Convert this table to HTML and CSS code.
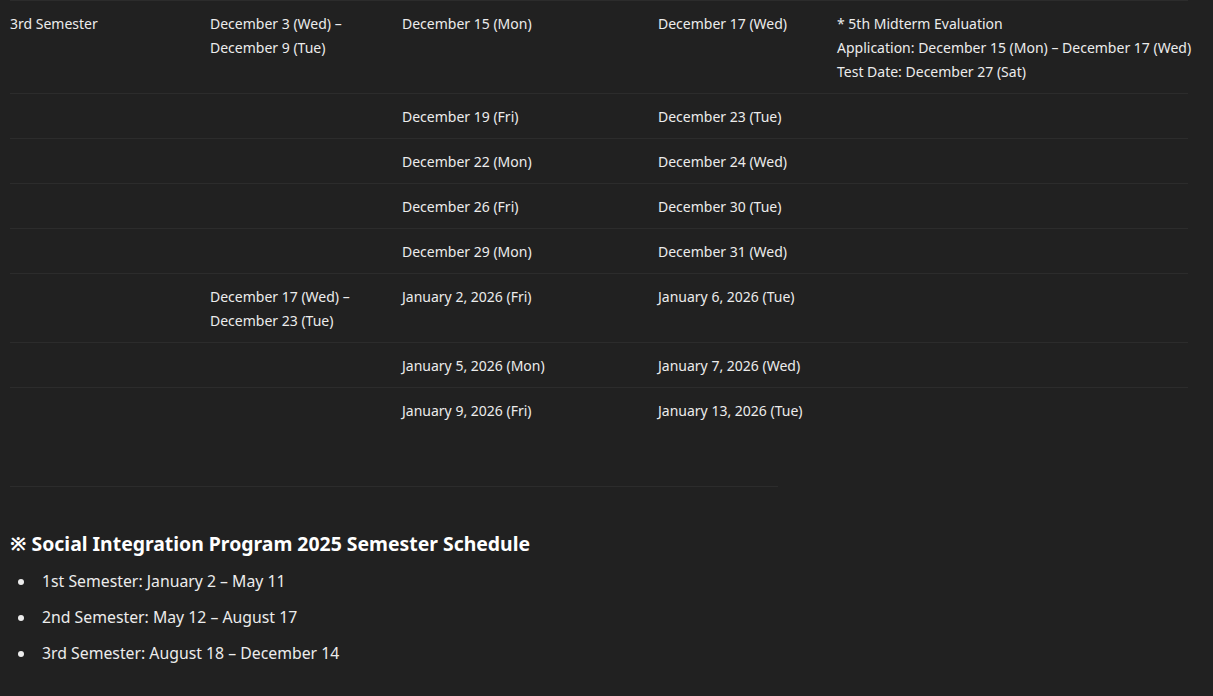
FILE: index.html
```html
<!DOCTYPE html>
<html lang="en">
<head>
<meta charset="utf-8">
<title>Schedule</title>
<link rel="stylesheet" href="styles.css">
</head>
<body>
<div class="page">
  <div class="table">
    <div class="row">
      <div class="cell">3rd Semester</div>
      <div class="cell">December 3 (Wed) –<br>December 9 (Tue)</div>
      <div class="cell">December 15 (Mon)</div>
      <div class="cell">December 17 (Wed)</div>
      <div class="cell">* 5th Midterm Evaluation<br>Application: December 15 (Mon) – December 17 (Wed)<br>Test Date: December 27 (Sat)</div>
    </div>
    <div class="row">
      <div class="cell"></div><div class="cell"></div>
      <div class="cell">December 19 (Fri)</div>
      <div class="cell">December 23 (Tue)</div>
      <div class="cell"></div>
    </div>
    <div class="row">
      <div class="cell"></div><div class="cell"></div>
      <div class="cell">December 22 (Mon)</div>
      <div class="cell">December 24 (Wed)</div>
      <div class="cell"></div>
    </div>
    <div class="row">
      <div class="cell"></div><div class="cell"></div>
      <div class="cell">December 26 (Fri)</div>
      <div class="cell">December 30 (Tue)</div>
      <div class="cell"></div>
    </div>
    <div class="row">
      <div class="cell"></div><div class="cell"></div>
      <div class="cell">December 29 (Mon)</div>
      <div class="cell">December 31 (Wed)</div>
      <div class="cell"></div>
    </div>
    <div class="row">
      <div class="cell"></div>
      <div class="cell">December 17 (Wed) –<br>December 23 (Tue)</div>
      <div class="cell">January 2, 2026 (Fri)</div>
      <div class="cell">January 6, 2026 (Tue)</div>
      <div class="cell"></div>
    </div>
    <div class="row">
      <div class="cell"></div><div class="cell"></div>
      <div class="cell">January 5, 2026 (Mon)</div>
      <div class="cell">January 7, 2026 (Wed)</div>
      <div class="cell"></div>
    </div>
    <div class="row last">
      <div class="cell"></div><div class="cell"></div>
      <div class="cell">January 9, 2026 (Fri)</div>
      <div class="cell">January 13, 2026 (Tue)</div>
      <div class="cell"></div>
    </div>
  </div>
  <div class="divider"></div>
  <h3 class="heading">※ Social Integration Program 2025 Semester Schedule</h3>
  <ul class="list">
    <li>1st Semester: January 2 – May 11</li>
    <li>2nd Semester: May 12 – August 17</li>
    <li>3rd Semester: August 18 – December 14</li>
  </ul>
</div>
</body>
</html>
```
FILE: styles.css
```css
html, body {
  margin: 0;
  padding: 0;
  background: #212121;
}
body {
  font-family: "Noto Sans", "Noto Sans CJK KR", sans-serif;
  color: #ececec;
}
.page {
  padding: 0 10px;
}
.table {
  width: 1178px;
  border-top: 1px solid #2c2c2c;
}
.row {
  display: grid;
  grid-template-columns: 200px 192px 256px 179px 1fr;
  border-bottom: 1px solid #2c2c2c;
}
.row.last {
  border-bottom: none;
}
.cell {
  padding: 11px 0 9px;
  font-size: 14px;
  line-height: 24px;
  min-height: 24px;
  white-space: nowrap;
}
.divider {
  width: 768px;
  margin-top: 54px;
  border-top: 1px solid #2c2c2c;
}
.heading {
  margin: 44px 0 0;
  font-size: 19.4px;
  line-height: 26px;
  font-weight: 700;
  color: #ffffff;
}
.list {
  margin: 12px 0 0;
  padding: 0;
  list-style: none;
  font-size: 15.8px;
  line-height: 24px;
}
.list li {
  display: flex;
  align-items: center;
  margin-bottom: 12px;
}
.list li::before {
  content: "";
  width: 6px;
  height: 6px;
  border-radius: 50%;
  background: #ececec;
  margin: 1px 18px 0 8px;
  flex: none;
}
```
